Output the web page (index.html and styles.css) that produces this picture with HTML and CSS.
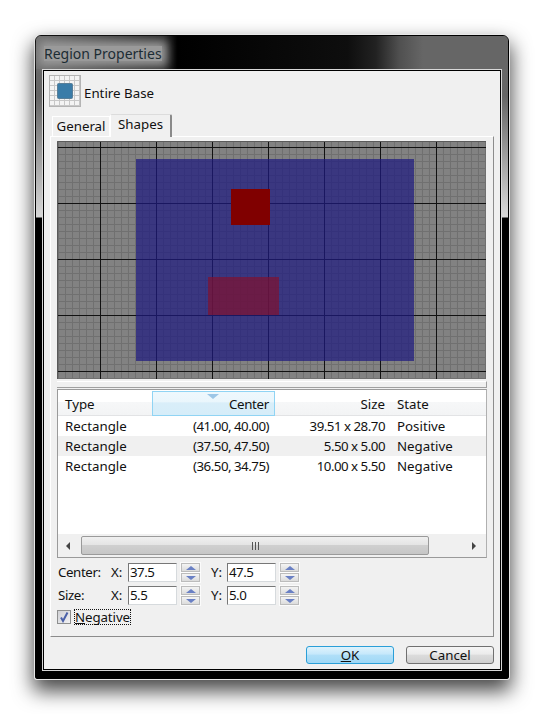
FILE: index.html
```html
<!DOCTYPE html>
<html lang="en">
<head>
<meta charset="utf-8">
<title>Region Properties</title>
<link rel="stylesheet" href="styles.css">
</head>
<body>
<div class="window">
  <div class="titlebar"><span class="title">Region Properties</span></div>
  <div class="client">
    <div class="region-head">
      <svg class="region-icon" width="32" height="32" viewBox="0 0 32 32">
        <defs>
          <pattern id="iconGrid" width="5" height="5" patternUnits="userSpaceOnUse">
            <path d="M.5 0V5M0 .5H5" stroke="#c8c8c8" fill="none"/>
          </pattern>
        </defs>
        <rect width="32" height="32" fill="#f4f4f4"/>
        <rect width="32" height="32" fill="url(#iconGrid)"/>
        <rect x=".5" y=".5" width="31" height="31" fill="none" stroke="#b4b4b4"/>
        <rect x="8.5" y="8.5" width="15" height="15" rx="1" fill="#3a7ca8" stroke="#5a7f98"/>
      </svg>
      <span class="region-name">Entire Base</span>
    </div>
    <div class="tabs">
      <div class="tab">General</div>
      <div class="tab tab-active">Shapes</div>
    </div>
    <div class="pane">
      <svg class="canvas" width="429" height="238" viewBox="0 0 429 238">
        <rect width="429" height="238" fill="#828282"/>
        <path d="M1 119H429" stroke="#707070" stroke-width="238" stroke-dasharray="1 6" fill="none"/>
        <path d="M214.5 -1V238" stroke="#707070" stroke-width="429" stroke-dasharray="1 6" fill="none"/>
        <path d="M43.5 1V238M99.5 1V238M155.5 1V238M211.5 1V238M267.5 1V238M323.5 1V238M379.5 1V238M1 6.5H429M1 62.5H429M1 118.5H429M1 174.5H429M1 230.5H429" stroke="#111" fill="none"/>
        <path d="M.5 238V.5H429" stroke="#5a5a5a" fill="none"/>
        <rect x="79" y="18" width="278" height="202" fill="#1e1a80" fill-opacity=".72"/>
        <rect x="151" y="136" width="71" height="38" fill="#7e1230" fill-opacity=".72"/>
        <rect x="174" y="48" width="39" height="36" fill="#800000"/>
      </svg>
      <div class="splitter"></div>
      <div class="list">
        <div class="list-row list-header">
          <div class="col col-type">Type</div>
          <div class="col col-center col-sorted">Center<span class="sort-arrow"></span></div>
          <div class="col col-size">Size</div>
          <div class="col col-state">State</div>
        </div>
        <div class="list-row">
          <div class="col col-type">Rectangle</div>
          <div class="col col-center num">(41.00, 40.00)</div>
          <div class="col col-size num">39.51 x 28.70</div>
          <div class="col col-state">Positive</div>
        </div>
        <div class="list-row list-row-alt">
          <div class="col col-type">Rectangle</div>
          <div class="col col-center num">(37.50, 47.50)</div>
          <div class="col col-size num">5.50 x 5.00</div>
          <div class="col col-state">Negative</div>
        </div>
        <div class="list-row">
          <div class="col col-type">Rectangle</div>
          <div class="col col-center num">(36.50, 34.75)</div>
          <div class="col col-size num">10.00 x 5.50</div>
          <div class="col col-state">Negative</div>
        </div>
        <div class="list-fill"></div>
        <div class="scrollbar">
          <div class="scroll-btn"><span class="arrow-left"></span></div>
          <div class="scroll-thumb"><span class="grip"></span><span class="grip"></span><span class="grip"></span></div>
          <div class="scroll-track"></div>
          <div class="scroll-btn"><span class="arrow-right"></span></div>
        </div>
      </div>
      <div class="field-grid">
        <span class="field-name">Center:</span>
        <span class="axis">X:</span>
        <span class="input">37.5</span>
        <span class="spin"><span class="spin-btn"><span class="tri-up"></span></span><span class="spin-btn"><span class="tri-down"></span></span></span>
        <span class="axis axis-y">Y:</span>
        <span class="input">47.5</span>
        <span class="spin"><span class="spin-btn"><span class="tri-up"></span></span><span class="spin-btn"><span class="tri-down"></span></span></span>
        <span class="field-name">Size:</span>
        <span class="axis">X:</span>
        <span class="input">5.5</span>
        <span class="spin"><span class="spin-btn"><span class="tri-up"></span></span><span class="spin-btn"><span class="tri-down"></span></span></span>
        <span class="axis axis-y">Y:</span>
        <span class="input">5.0</span>
        <span class="spin"><span class="spin-btn"><span class="tri-up"></span></span><span class="spin-btn"><span class="tri-down"></span></span></span>
      </div>
      <div class="check-row">
        <span class="checkbox">
          <svg width="12" height="12" viewBox="0 0 12 12"><path d="M3 6.5l2 3.5L9.5 1.5" fill="none" stroke="#4a60a8" stroke-width="2"/></svg>
        </span>
        <span class="check-label"><u>N</u>egative</span>
      </div>
    </div>
    <div class="actions">
      <div class="btn btn-default"><u>O</u>K</div>
      <div class="btn">Cancel</div>
    </div>
  </div>
</div>
</body>
</html>
```

FILE: styles.css
```css
* { box-sizing: border-box; }

html, body {
  margin: 0;
  height: 100%;
  background: #fff;
  overflow: hidden;
}

body {
  font-family: "Noto Sans", "Open Sans", sans-serif;
  font-size: 13.3px;
  color: #111;
  padding: 35px 0 0 35px;
}

.window {
  width: 474px;
  height: 644px;
  display: flex;
  flex-direction: column;
  padding: 1px 7px 8px;
  border-radius: 6px 6px 2px 2px;
  border: 1px solid #000;
  background: linear-gradient(to bottom, #6a6a6a 0, #666 60px, #d8d8d8 181px, #000 182px, #000 100%);
  box-shadow: 0 0 0 1px #e8e8e8, 0 10px 20px 2px rgba(0, 0, 0, .72);
}

.titlebar {
  height: 33px;
  margin: -1px -7px 0;
  padding: 0 0 0 8px;
  display: flex;
  align-items: center;
  border-radius: 5px 5px 0 0;
  background: linear-gradient(to right, #707070 0, #2a2a2a 27%, #000 30%, #0e0e0e 66%, #222 72%, #505050 77%, #666 82%, #666 100%);
}

.title {
  font-size: 14px;
  color: #1c2c34;
  background: #9a9a9a;
  box-shadow: 0 0 10px 5px #9a9a9a;
  line-height: 15px;
  margin-top: 1px;
}

.client {
  flex: 1;
  display: flex;
  flex-direction: column;
  margin-top: 1px;
  background: #f0f0f0;
  border: 1px solid #000;
  box-shadow: 0 0 0 1px #d8d8d8;
  padding: 4px 5px 0 6px;
}

.region-head {
  display: flex;
  align-items: center;
  gap: 3px;
  height: 32px;
  margin-left: -1px;
  flex: none;
}

.region-icon { display: block; flex: none; }

.region-name { margin-top: 3px; }

.tabs {
  display: flex;
  align-items: flex-end;
  height: 29px;
  margin-left: 2px;
  flex: none;
}

.tab {
  width: 58px;
  height: 20px;
  text-align: center;
  line-height: 18px;
  background: #f0f0f0;
  border: 1px solid #fff;
  border-bottom: 0;
}

.tab-active {
  width: 62px;
  height: 23px;
  margin-bottom: -1px;
  position: relative;
  border-radius: 2px 2px 0 0;
  border-right: 2px solid #8a8a8a;
  border-top: 1px solid #dcdcdc;
  line-height: 18px;
}

.pane {
  width: 444px;
  height: 501px;
  flex: none;
  padding: 4px 7px 0 6px;
  border: 1px solid;
  border-color: #fff #8c8c8c #8c8c8c #fff;
}

.canvas { display: block; }

.splitter {
  height: 7px;
  margin: 2px -1px 2px 0;
  background: #f0f0f0;
  border-top: 1px solid #fff;
  border-bottom: 1px solid #a0a0a0;
  border-right: 1px solid #a0a0a0;
}

.list {
  width: 430px;
  height: 169px;
  display: flex;
  flex-direction: column;
  background: #fff;
  border: 1px solid #8e9ea2;
  border-color: #9a9a9a #b0b0b0 #9a9a9a #9a9a9a;
  padding-top: 1px;
  margin-top: -1px;
}

.list-row {
  display: flex;
  height: 20px;
  line-height: 20px;
  flex: none;
}

.list-row-alt { background: #f0f0f0; }

.list-header {
  height: 25px;
  line-height: 26px;
  background: linear-gradient(to bottom, #fff 0, #fff 45%, #f6f7f8 46%, #f3f4f5 100%);
  border-bottom: 1px solid #e2e3e5;
}

.col {
  flex: none;
  padding: 0 6px;
  white-space: nowrap;
}

.num { letter-spacing: -.5px; }

.col-type { width: 94px; padding-left: 7px; }
.col-center { width: 123px; text-align: right; }
.col-size { width: 116px; text-align: right; }
.col-state { flex: 1; }

.col-sorted {
  position: relative;
  background: linear-gradient(to bottom, #eef8fd 0, #eaf6fc 45%, #d9eef9 46%, #d6edf9 100%);
  border: 1px solid #90d4f4;
  height: 25px;
  line-height: 24px;
  padding-right: 5px;
  letter-spacing: -.3px;
}

.sort-arrow {
  position: absolute;
  top: 2px;
  left: 54px;
  width: 0;
  height: 0;
  border-left: 6px solid transparent;
  border-right: 6px solid transparent;
  border-top: 5px solid #9cc6e6;
}

.list-fill { flex: 1; }

.scrollbar {
  height: 23px;
  flex: none;
  display: flex;
  align-items: center;
  background: #f0f0f0;
}

.scroll-btn {
  width: 22px;
  flex: none;
  display: flex;
  align-items: center;
  justify-content: center;
  height: 100%;
  padding-right: 2px;
}

.arrow-left {
  border-top: 4px solid transparent;
  border-bottom: 4px solid transparent;
  border-right: 4px solid #444;
}

.arrow-right {
  border-top: 4px solid transparent;
  border-bottom: 4px solid transparent;
  border-left: 4px solid #444;
}

.scroll-thumb {
  width: 348px;
  height: 19px;
  margin-left: 1px;
  display: flex;
  align-items: center;
  justify-content: center;
  gap: 2px;
  border: 1px solid #9a9a9a;
  border-radius: 2px;
  background: linear-gradient(to bottom, #f0f0f0 0, #e4e4e4 45%, #cfcfcf 50%, #c6c6c6 100%);
}

.grip {
  width: 1px;
  height: 8px;
  background: #555;
}

.scroll-track { flex: 1; }

.field-grid {
  display: grid;
  grid-template-columns: 53px 17px 49px 23px 27px 49px 23px;
  grid-auto-rows: 19px;
  row-gap: 4px;
  margin-top: 5px;
  margin-left: 1px;
  align-items: center;
}

.field-name, .axis { line-height: 19px; }

.field-name { letter-spacing: -.4px; }

.axis-y { padding-left: 11px; }

.input {
  height: 19px;
  line-height: 17px;
  padding-left: 1px;
  letter-spacing: -.5px;
  background: #fff;
  border: 1px solid #d6dadd;
  border-top-color: #777;
  border-left-color: #777;
}

.spin {
  display: flex;
  flex-direction: column;
  gap: 1px;
  height: 19px;
  margin-left: 4px;
  width: 19px;
}

.spin-btn {
  flex: 1;
  display: flex;
  align-items: center;
  justify-content: center;
  border: 1px solid #bcbcbc;
  background: linear-gradient(to bottom, #f4f4f4, #dcdcdc);
  box-shadow: 0 0 0 1px rgba(255, 255, 255, .7);
}

.tri-up {
  border-left: 5px solid transparent;
  border-right: 5px solid transparent;
  border-bottom: 4px solid #6a80c4;
}

.tri-down {
  border-left: 5px solid transparent;
  border-right: 5px solid transparent;
  border-top: 4px solid #6a80c4;
}

.check-row {
  display: flex;
  align-items: center;
  gap: 4px;
  margin-top: 4px;
  height: 15px;
}

.checkbox {
  width: 14px;
  height: 14px;
  display: block;
  border: 1px solid #8e8f8f;
  background: linear-gradient(135deg, #cfd0d4, #f2f2f4);
}

.checkbox svg { display: block; }

.check-label {
  line-height: 14px;
  outline: 1px dotted #111;
  letter-spacing: -.1px;
}

.actions {
  display: flex;
  justify-content: flex-end;
  gap: 12px;
  padding: 9px 0 0;
  width: 444px;
}

.btn {
  width: 88px;
  height: 18px;
  border: 1px solid #707070;
  border-radius: 3px;
  text-align: center;
  line-height: 16px;
  background: linear-gradient(to bottom, #f6f6f6 0, #ebebeb 45%, #dcdcdc 50%, #cfcfcf 100%);
}

.btn-default {
  border-color: #2a9fd8;
  background: linear-gradient(to bottom, #dff3fc 0, #c5e8fb 45%, #b0dff8 50%, #9fd8f6 100%);
}
```
